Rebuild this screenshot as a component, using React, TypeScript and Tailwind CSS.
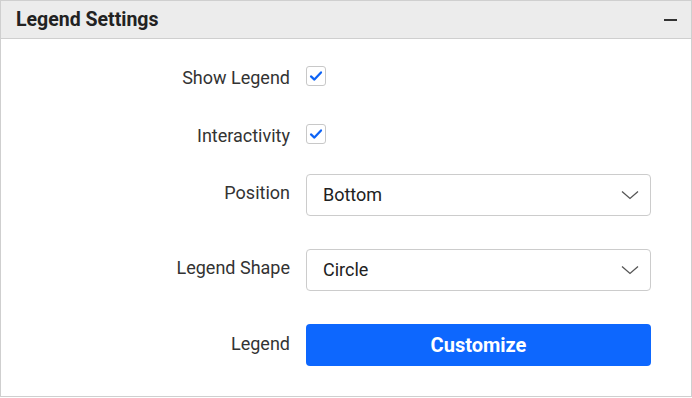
import React from 'react';

const font = { fontFamily: 'Roboto, "Noto Sans", sans-serif' };

function Check() {
  return (
    <div className="w-5 h-5 rounded-[3px] border border-[#c8c8c8] bg-white flex items-center justify-center">
      <svg width="14" height="14" viewBox="0 0 14 14" fill="none">
        <path d="M2 7.4 5.4 10.6 12 3.4" stroke="#0d63f5" strokeWidth="2.2" strokeLinecap="round" strokeLinejoin="round" />
      </svg>
    </div>
  );
}

function Select({ value }: { value: string }) {
  return (
    <div className="flex-1 h-[42px] rounded-[4px] border border-[#cccccc] bg-white flex items-center justify-between pl-4 pr-[10px]">
      <span className="text-[18px] text-[#212121] pb-[1px]">{value}</span>
      <svg width="20" height="12" viewBox="0 0 20 12" fill="none">
        <path d="M2 2.5 10 9.5 18 2.5" stroke="#555" strokeWidth="1.3" />
      </svg>
    </div>
  );
}

function Row({
  label,
  children,
  className,
  labelClass,
}: {
  label: string;
  children: React.ReactNode;
  className: string;
  labelClass: string;
}) {
  return (
    <div className={`flex items-center h-[42px] ${className}`}>
      <div className={`w-[289px] text-right text-[18px] text-[#333333] ${labelClass}`}>{label}</div>
      <div className="flex-1 flex items-center pl-4 pr-10">{children}</div>
    </div>
  );
}

export default function App() {
  return (
    <div style={font} className="w-[692px] h-[398px] bg-white">
      <div className="w-[692px] h-[397px] border border-[#cfcfcf] flex flex-col">
        <div className="h-[38px] bg-[#ececec] border-b border-[#cfcfcf] flex items-center justify-between pl-[15px] pr-[14px] shrink-0">
          <span className="text-[19.5px] font-bold text-[#222]">Legend Settings</span>
          <div className="w-[13px] h-[2px] bg-[#333]" />
        </div>
        <div className="flex flex-col">
          <Row label="Show Legend" className="mt-[16px]" labelClass="pt-[2px]">
            <Check />
          </Row>
          <Row label="Interactivity" className="mt-[16px]" labelClass="pt-[2px]">
            <Check />
          </Row>
          <Row label="Position" className="mt-[19px]" labelClass="pb-[5px]">
            <Select value="Bottom" />
          </Row>
          <Row label="Legend Shape" className="mt-[33px]" labelClass="pb-[5px]">
            <Select value="Circle" />
          </Row>
          <Row label="Legend" className="mt-[33px]" labelClass="pb-[4px]">
            <button className="flex-1 h-[42px] rounded-[4px] bg-[#0d67fe] text-white text-[20px] font-bold pb-[1px]">
              Customize
            </button>
          </Row>
        </div>
      </div>
    </div>
  );
}
